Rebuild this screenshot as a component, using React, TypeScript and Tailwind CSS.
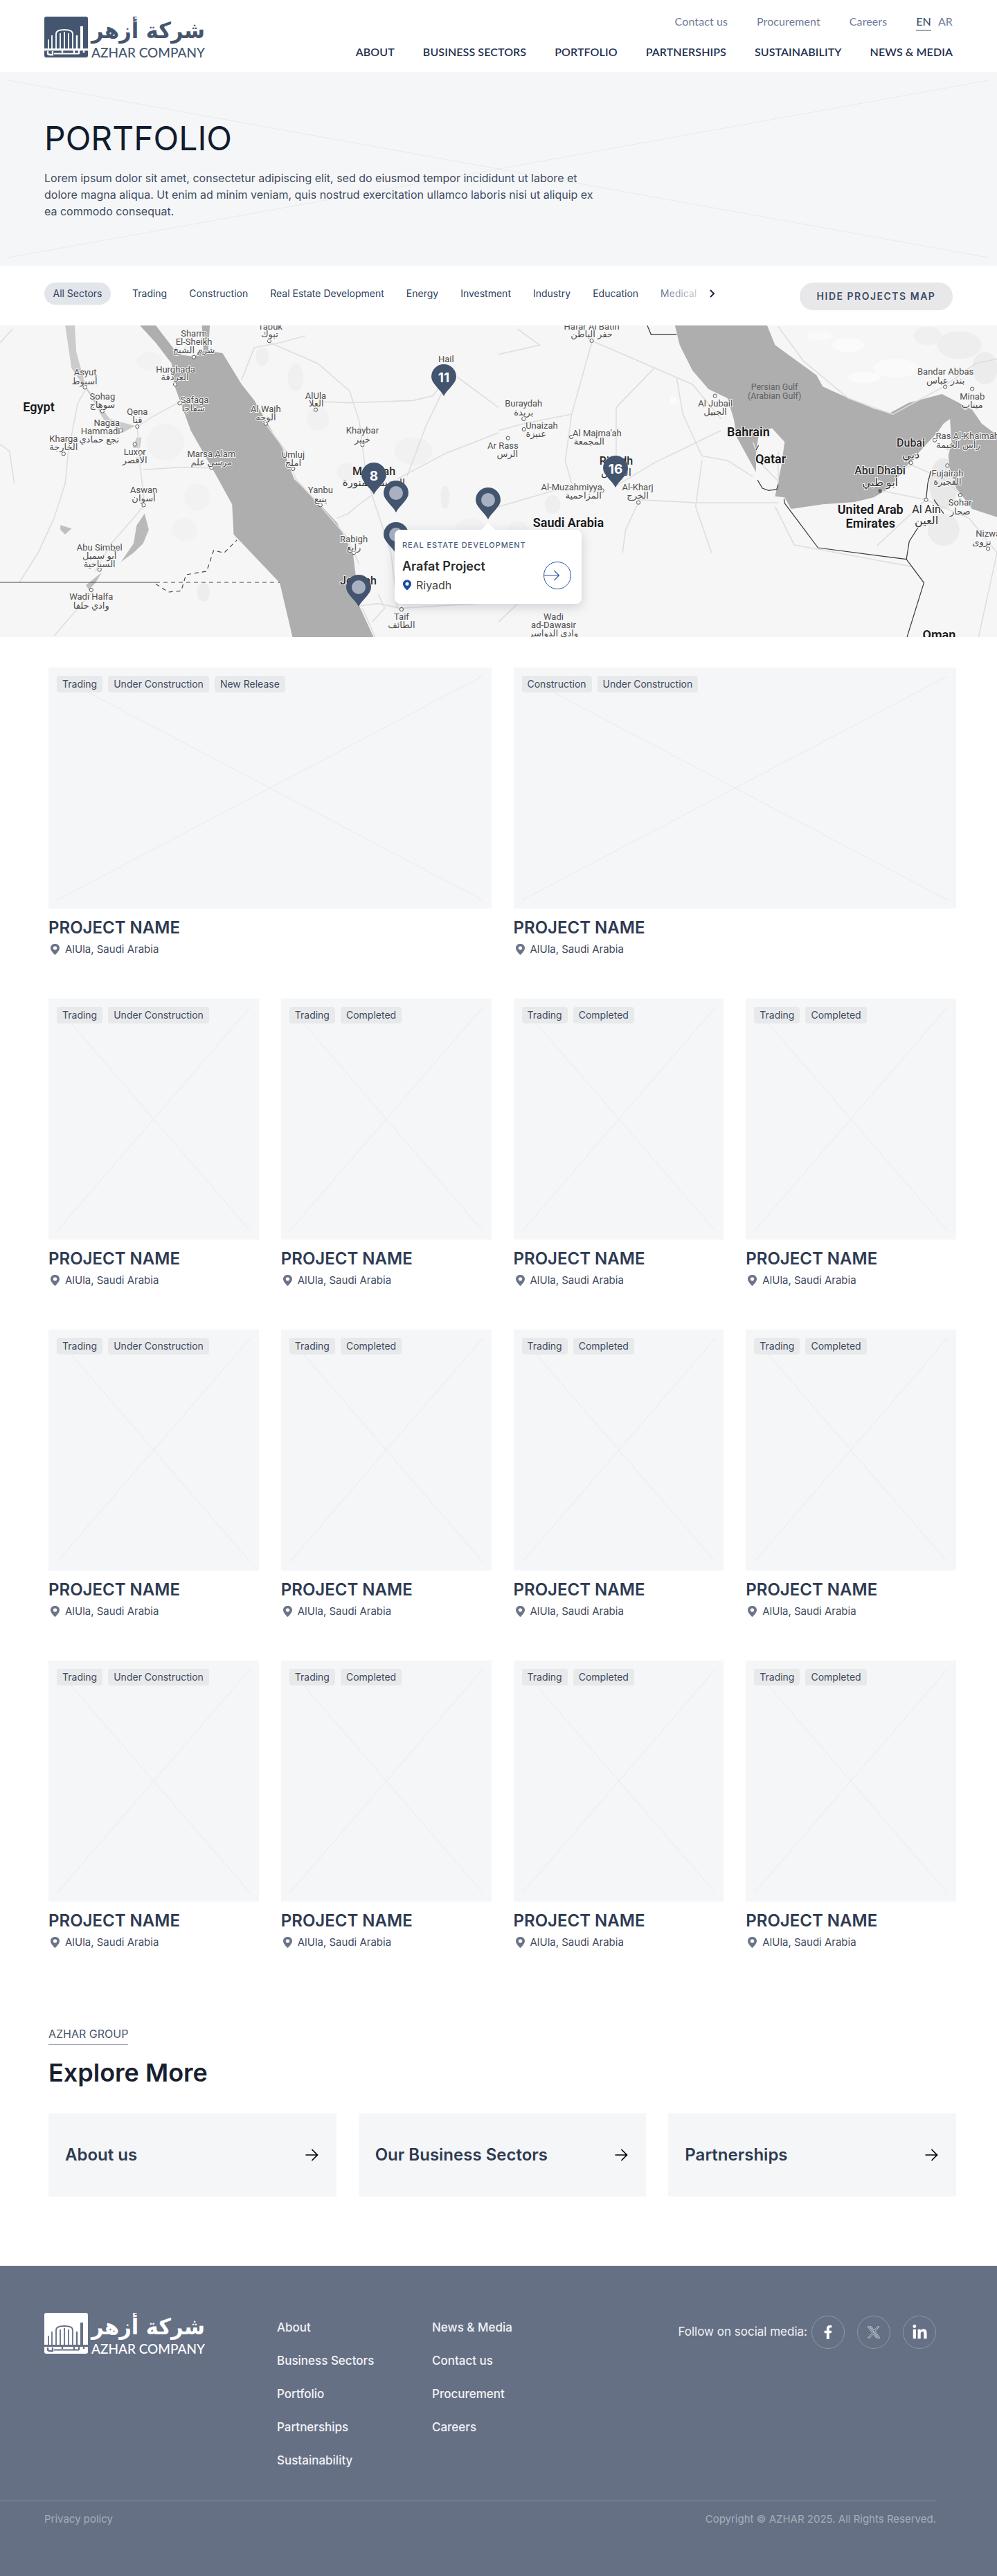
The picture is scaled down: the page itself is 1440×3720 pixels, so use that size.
import React from "react";
import { FaFacebookF, FaLinkedinIn } from "react-icons/fa";

const fx = (p: number, x: number) => p * 720 + (x * 720) / 1568;
const fy = (y: number) => y / 3 - 5;

const Cross = ({ color = "#e9eaed" }: { color?: string }) => (
  <svg className="absolute inset-3 w-[calc(100%-24px)] h-[calc(100%-24px)]" viewBox="0 0 100 100" preserveAspectRatio="none">
    <line x1="0" y1="0" x2="100" y2="100" stroke={color} strokeWidth="1" vectorEffect="non-scaling-stroke" />
    <line x1="100" y1="0" x2="0" y2="100" stroke={color} strokeWidth="1" vectorEffect="non-scaling-stroke" />
  </svg>
);

const Logo = ({ box, cut, text }: { box: string; cut: string; text: string }) => (
  <svg width="232" height="59" viewBox="0 0 232 59" className="block shrink-0">
    <rect x="0" y="0" width="63" height="59" rx="3" fill={box} />
    <g stroke={cut} fill="none" strokeWidth="1.8">
      <path d="M11 46V27" />
      <path d="M6 46V33" />
      <path d="M17 46V25Q17 19 29 19Q41 19 41 25V46" />
      <path d="M23 46V24M29 46V22M35 46V24" />
      <path d="M47 46V27" strokeWidth="2.4" />
      <path d="M54 46V14" strokeWidth="4" />
      <path d="M0 47.5H63" strokeWidth="3" />
      <path d="M5 50V53Q5 55 9 55H12V50" strokeWidth="2.4" />
      <path d="M14 53.5H50" strokeWidth="2" />
      <path d="M26 49V52M43 49V53M50 49V54M57 49V52" strokeWidth="2.4" />
    </g>
    <text x="68" y="31" textLength="164" lengthAdjust="spacingAndGlyphs" fontFamily="'DejaVu Sans',sans-serif" fontWeight="700" fontSize="32" fill={text}>شركة أزهر</text>
    <text x="68" y="58.5" textLength="164" lengthAdjust="spacingAndGlyphs" fontFamily="Lato,sans-serif" fontWeight="500" fontSize="19.5" fill={text}>AZHAR COMPANY</text>
  </svg>
);

const PinIcon = ({ color, w = 15, h = 16 }: { color: string; w?: number; h?: number }) => (
  <svg width={w} height={h} viewBox="0 0 15 16" className="shrink-0">
    <path fillRule="evenodd" fill={color} d="M7.5 0C3.6 0 1 2.7 1 6c0 3.600 4.200 8 6.500 10C9.800 14 14 9.600 14 6c0-3.300-2.600-6-6.500-6zm0 3.400A2.700 2.700 0 1 1 7.500 8.800 2.700 2.700 0 0 1 7.500 3.400z" />
  </svg>
);

type Lab = [number, number, number, string, number?, number?, string?];
const labels: Lab[] = [
  [0, 850, 18, "Tabuk"], [0, 848, 52, "تبوك"],
  [0, 610, 48, "Sharm"], [0, 610, 85, "El-Sheikh"], [0, 610, 122, "شرم الشيخ"],
  [0, 552, 204, "Hurghada"], [0, 550, 238, "الغردقة"],
  [0, 268, 217, "Asyut"], [0, 266, 255, "أسيوط"],
  [0, 322, 321, "Sohag"], [0, 322, 358, "سوهاج"],
  [0, 122, 367, "Egypt", 18, 600, "#1a1a1a"],
  [0, 612, 337, "Safaga"], [0, 608, 373, "سفاجا"],
  [0, 432, 388, "Qena"], [0, 432, 424, "قنا"],
  [0, 336, 437, "Nagaa"], [0, 316, 472, "Hammadi"], [0, 312, 508, "نجع حمادي"],
  [0, 200, 505, "Kharga"], [0, 200, 541, "الخارجة"],
  [0, 424, 562, "Luxor"], [0, 424, 598, "الأقصر"],
  [0, 665, 570, "Marsa Alam"], [0, 665, 608, "مرسى علم"],
  [0, 836, 377, "Al Wajh"], [0, 836, 413, "الوجه"],
  [0, 993, 318, "AlUla"], [0, 995, 352, "العلا"],
  [0, 1403, 161, "Hail"],
  [0, 1140, 468, "Khaybar"], [0, 1140, 508, "خيبر"],
  [0, 922, 573, "Umluj"], [0, 922, 611, "املج"],
  [0, 1176, 645, "Madinah", 16, 500, "#2a2a2a"], [0, 1176, 695, "المدينة المنورة", 15, 400, "#333"],
  [0, 1008, 727, "Yanbu"], [0, 1008, 765, "ينبع"],
  [0, 452, 727, "Aswan"], [0, 452, 763, "أسوان"],
  [0, 1113, 940, "Rabigh"], [0, 1113, 977, "رابغ"],
  [0, 313, 975, "Abu Simbel"], [0, 313, 1013, "أبو سمبل"], [0, 313, 1047, "السياحية"],
  [0, 1127, 1120, "Jeddah", 16, 500, "#2a2a2a"],
  [0, 287, 1190, "Wadi Halfa"], [0, 287, 1227, "وادي حلفا"],
  [0, 1263, 1276, "Taif"], [0, 1263, 1312, "الطائف"],
  [1, 293, 18, "Hafar Al Batin"], [1, 293, 52, "حفر الباطن"],
  [1, 79, 353, "Buraydah"], [1, 79, 390, "بريدة"],
  [1, 136, 447, "Unaizah"], [1, 118, 485, "عنيزة"],
  [1, 14, 535, "Ar Rass"], [1, 28, 572, "الرس"],
  [1, 310, 482, "Al Majma'ah"], [1, 285, 517, "المجمعة"],
  [1, 370, 600, "Riyadh", 16, 500, "#2a2a2a"], [1, 370, 650, "الرياض", 15, 400, "#333"],
  [1, 230, 714, "Al-Muzahmiyya"], [1, 267, 750, "المزاحمية"],
  [1, 438, 716, "Al-Kharj"], [1, 438, 752, "الخرج"],
  [1, 220, 868, "Saudi Arabia", 18, 600, "#1a1a1a"],
  [1, 173, 1275, "Wadi"], [1, 173, 1311, "ad-Dawasir"], [1, 173, 1348, "وادي الدواسر"],
  [1, 682, 351, "Al Jubail"], [1, 682, 388, "الجبيل"],
  [1, 868, 279, "Persian Gulf", 12.5, 400, "#626262"], [1, 868, 318, "(Arabian Gulf)", 12.5, 400, "#626262"],
  [1, 786, 474, "Bahrain", 18, 600, "#1a1a1a"],
  [1, 856, 593, "Qatar", 18, 600, "#1a1a1a"],
  [1, 1406, 214, "Bandar Abbas"], [1, 1406, 253, "بندر عباس"],
  [1, 1490, 322, "Minab"], [1, 1490, 358, "ميناب"],
  [1, 1297, 522, "Dubai", 16, 500, "#2a2a2a"], [1, 1297, 575, "دبي", 16, 400, "#333"],
  [1, 1475, 494, "Ras Al-Khaimah"], [1, 1446, 533, "رأس الخيمة"],
  [1, 1412, 655, "Fujairah"], [1, 1412, 691, "الفجيرة"],
  [1, 1200, 642, "Abu Dhabi", 16, 500, "#2a2a2a"], [1, 1200, 695, "أبو ظبي", 16, 400, "#333"],
  [1, 1452, 782, "Sohar"], [1, 1452, 820, "صحار"],
  [1, 1346, 810, "Al Ain", 16, 400, "#2a2a2a"], [1, 1346, 860, "العين", 16, 400, "#333"],
  [1, 1170, 811, "United Arab", 18, 600, "#1a1a1a"], [1, 1170, 871, "Emirates", 18, 600, "#1a1a1a"],
  [1, 1386, 1355, "Oman", 18, 600, "#1a1a1a"],
  [1, 1540, 915, "Nizwa"], [1, 1520, 953, "نزوى"],
];

const dots: [number, number, number][] = [
  [0, 847, 82], [0, 610, 152], [0, 551, 270], [0, 267, 283], [0, 322, 386], [0, 565, 352], [0, 432, 453], [0, 380, 470],
  [0, 200, 571], [0, 424, 530], [0, 665, 632], [0, 836, 440], [0, 993, 380], [0, 1140, 532], [0, 922, 636], [0, 1008, 793],
  [0, 452, 793], [0, 1113, 1000], [0, 313, 1073], [0, 287, 1161], [0, 1263, 1245],
  [1, 293, 81], [1, 79, 420], [1, 80, 465], [1, 30, 503], [1, 229, 498], [1, 326, 730], [1, 440, 782], [1, 681, 320],
  [1, 1405, 281], [1, 1490, 290], [1, 1297, 610], [1, 1372, 512], [1, 1412, 622], [1, 1452, 750], [1, 1345, 770], [1, 1540, 982], [1, 1200, 732],
];

const roads0 = [
  "270,290 245,350 215,560 205,700 170,850 120,1000 60,1130",
  "432,460 440,620 455,790 420,850 350,960 300,1080",
  "450,640 560,630 670,632",
  "430,455 480,410 560,350",
  "290,1170 220,1280 170,1360",
  "0,530 30,560 45,700",
  "0,90 40,30",
  "1140,540 1150,640 1170,750 1230,1000 1250,1240",
  "1280,670 1340,450 1396,290",
  "1396,260 1360,320 1300,340 1100,350 1000,345",
  "1250,680 1400,570 1568,480",
  "1170,750 1130,790 1095,830 1060,850",
  "760,250 800,110 880,90 960,60",
  "850,90 1000,180 1100,300 1130,430 1140,530",
  "1440,240 1568,370",
  "840,450 900,560 930,680 1010,800 1090,930 1130,1050",
  "1130,1230 1190,1220 1260,1240 1500,1220",
  "1140,1240 1180,1365",
  "1190,1180 1210,1240 1170,1300",
];
const roads1 = [
  "0,140 130,100 60,30",
  "293,81 610,270 700,420",
  "293,90 230,400 210,600 230,700",
  "490,200 370,370 370,640",
  "0,470 80,440 230,400",
  "370,710 490,610 700,470",
  "0,800 200,720 330,730",
  "440,780 400,900 390,1000",
  "440,770 620,783 880,783",
  "560,240 580,400 640,580 720,600 800,670",
  "640,600 620,800 670,1000",
  "870,800 930,965 1300,1060 1340,1130",
  "1200,730 1345,770 1480,850",
  "1345,770 1190,970",
  "1480,850 1568,1000 1510,1365",
  "1240,660 1300,620 1400,680 1450,740",
  "880,20 960,170 1100,330 1240,400",
  "1240,400 1400,280 1500,180 1568,160",
  "800,520 830,620 880,690 880,560",
  "0,1300 60,1220",
];
const borders1 = [
  "468,15 480,55 560,55",
  "898,765 900,785 1005,978 1283,1028 1338,1130 1285,1365",
  "1283,1028 1292,950 1320,890",
  "1345,770 1350,700 1360,645",
  "1370,770 1400,830",
  "815,685 830,720 850,730 875,725 880,705",
  "810,555 818,535",
];

const blobs: [number, number, number, number, number, string][] = [
  [0, 825, 150, 20, 40, "#efefef"], [0, 930, 240, 25, 60, "#f0f0f0"], [0, 1000, 420, 35, 50, "#f1f1f1"],
  [0, 470, 170, 40, 40, "#f2f2f2"], [0, 520, 520, 60, 80, "#f2f2f2"], [0, 620, 760, 40, 60, "#f2f2f2"], [0, 580, 900, 40, 50, "#f2f2f2"],
  [0, 640, 1170, 20, 40, "#ededed"], [0, 1300, 560, 60, 60, "#f1f1f1"], [0, 1400, 760, 14, 50, "#eeeeee"], [0, 1090, 650, 30, 40, "#f0f0f0"],
  [0, 1480, 900, 50, 50, "#f2f2f2"], [0, 1300, 1050, 40, 50, "#f2f2f2"],
  [1, 170, 790, 25, 40, "#eeeeee"], [1, 60, 900, 30, 40, "#f2f2f2"], [1, 1400, 900, 50, 70, "#ececec"], [1, 1400, 700, 45, 110, "#e8e8e8"],
  [1, 1100, 100, 50, 30, "#fbfbfb"], [1, 1250, 200, 70, 40, "#fafafa"], [1, 1450, 100, 70, 60, "#eeeeee"], [1, 1350, 60, 45, 40, "#f0f0f0"],
  [1, 1530, 200, 40, 70, "#ececec"], [1, 550, 340, 12, 18, "#fbfbfb"], [1, 1010, 60, 40, 20, "#fafafa"], [1, 1150, 240, 50, 25, "#fbfbfb"],
];

const Pin = ({ x, top, n }: { x: number; top: number; n?: string }) => (
  <g transform={`translate(${x},${top - 470})`}>
    <path fill="#43546f" d="M0 46C-5 36 -18 28 -18 18A18 18 0 0 1 18 18C18 28 5 36 0 46Z" />
    {n ? (
      <text x="0" y="19" textAnchor="middle" dominantBaseline="central" fill="#fff" fontFamily="Inter,sans-serif" fontWeight="700" fontSize="19">{n}</text>
    ) : (
      <circle cx="0" cy="18" r="10" fill="#a9b0c2" />
    )}
  </g>
);

const MapArt = () => (
  <svg width="1440" height="450" viewBox="0 0 1440 450" className="block" fontFamily="Roboto,'DejaVu Sans',sans-serif">
    <rect width="1440" height="450" fill="#f6f6f6" />
    {blobs.map(([p, x, y, rx, ry, c], i) => (
      <ellipse key={i} cx={fx(p, x)} cy={fy(y)} rx={(rx * 720) / 1568} ry={ry / 3} fill={c} />
    ))}
    <g transform="translate(0,-5) scale(0.45918 0.33333)">
      <polygon fill="#cbcbcb" points="205,15 235,15 240,130 270,280 345,420 425,450 385,480 325,420 285,320 225,200" />
      <polygon fill="#cbcbcb" points="430,500 445,500 440,545 418,545" />
      <polygon fill="#b9b9b9" points="455,830 468,900 450,960 420,1000 380,1040 395,1010 420,960 430,880" />
      <polygon fill="#bfbfbf" points="190,880 225,895 205,920 190,900" />
      <polygon fill="#bdbdbd" points="270,1140 320,1085 300,1130 280,1160" />
      <polygon fill="#aeaeae" points="440,15 490,15 560,140 610,150 640,125 635,15 660,15 655,125 700,135 760,270 800,340 850,460 890,550 925,680 1000,780 1060,870 1110,1000 1120,1110 1130,1230 1175,1365 920,1365 880,1130 735,920 730,790 670,640 600,470 550,280 540,180 490,90" />
      {roads0.map((r, i) => (
        <polyline key={i} points={r} fill="none" stroke="#dedede" strokeWidth="1.6" vectorEffect="non-scaling-stroke" />
      ))}
      <polyline points="0,1128 490,1128" fill="none" stroke="#444" strokeWidth="1.2" vectorEffect="non-scaling-stroke" />
      <polyline points="490,1128 880,1128" fill="none" stroke="#444" strokeWidth="1.2" strokeDasharray="6 5" vectorEffect="non-scaling-stroke" />
      <polyline points="490,1135 530,1170 570,1165 585,1095 650,1080 672,990 705,1000 745,945" fill="none" stroke="#444" strokeWidth="1.2" strokeDasharray="6 5" vectorEffect="non-scaling-stroke" />
    </g>
    <g transform="translate(720,-5) scale(0.45918 0.33333)">
      <polygon fill="#aeaeae" points="555,15 845,15 870,100 960,190 1000,230 1020,280 1100,330 1180,375 1230,395 1290,350 1395,312 1490,380 1520,440 1568,490 1568,845 1490,810 1440,720 1420,640 1415,580 1425,520 1420,420 1400,440 1380,480 1345,530 1280,630 1230,720 1180,760 1120,780 1020,790 920,810 900,760 870,755 890,620 900,520 860,460 820,480 810,560 810,650 750,500 740,420 720,330 660,290 610,210 570,100" />
      {roads1.map((r, i) => (
        <polyline key={i} points={r} fill="none" stroke="#dedede" strokeWidth="1.6" vectorEffect="non-scaling-stroke" />
      ))}
      {borders1.map((r, i) => (
        <polyline key={i} points={r} fill="none" stroke="#3a3a3a" strokeWidth="1.2" vectorEffect="non-scaling-stroke" />
      ))}
    </g>
    {dots.map(([p, x, y], i) => (
      <circle key={i} cx={fx(p, x)} cy={fy(y)} r="2.6" fill="#fafafa" stroke="#555" strokeWidth="1" />
    ))}
    <circle cx={fx(1, 1200)} cy={fy(732)} r="1.400" fill="#333" />
    {labels.map(([p, x, y, t, s, w, c], i) => (
      <text key={i} x={fx(p, x)} y={fy(y)} textAnchor="middle" dominantBaseline="central" fontSize={s ?? 13} fontWeight={w ?? 400} fill={c ?? "#505050"} stroke="#f6f6f6" strokeWidth={c === "#626262" ? 0 : 2} style={{ paintOrder: "stroke" }}>{t}</text>
    ))}
    <Pin x={641} top={526} n="11" />
    <Pin x={540} top={668} n="8" />
    <Pin x={889} top={658} n="16" />
    <Pin x={572} top={694} />
    <Pin x={705} top={704} />
    <Pin x={572} top={754} />
    <Pin x={518} top={830} />
  </svg>
);

const Tag = ({ t }: { t: string }) => (
  <span className="h-6 px-2 flex items-center rounded bg-[#e8e9eb] text-sm leading-6 text-[#3f4b60]">{t}</span>
);

const Card = ({ tags }: { tags: string[] }) => (
  <div className="flex flex-col">
    <div className="relative h-[348px] bg-[#f5f6f8]">
      <Cross />
      <div className="absolute left-3 top-3 flex gap-2">
        {tags.map((t) => (
          <Tag key={t} t={t} />
        ))}
      </div>
    </div>
    <h3 className="mt-3 text-2xl leading-8 font-semibold text-[#2e3b52]">PROJECT NAME</h3>
    <div className="mt-[3px] h-6 flex items-center gap-[7px] pl-[2px] text-[15px] text-[#3f4b60]">
      <PinIcon color="#6b7488" />
      <span>AlUla, Saudi Arabia</span>
    </div>
  </div>
);

const Arrow = () => (
  <svg width="24" height="24" viewBox="0 0 24 24" fill="none" stroke="#000" strokeWidth="1.7" className="shrink-0">
    <path d="M3.500 12H20.500M12.500 4l8 8-8 8" />
  </svg>
);

const sectors = ["Trading", "Construction", "Real Estate Development", "Energy", "Investment", "Industry", "Education"];
const flinks1 = ["About", "Business Sectors", "Portfolio", "Partnerships", "Sustainability"];
const flinks2 = ["News & Media", "Contact us", "Procurement", "Careers"];
const mainNav = ["ABOUT", "BUSINESS SECTORS", "PORTFOLIO", "PARTNERSHIPS", "SUSTAINABILITY", "NEWS & MEDIA"];
const restTags = [
  ["Trading", "Under Construction"],
  ["Trading", "Completed"],
  ["Trading", "Completed"],
  ["Trading", "Completed"],
];

const Circle = ({ children }: { children: React.ReactNode }) => (
  <span className="w-12 h-12 rounded-full border border-[#8d95a6] flex items-center justify-center text-white">{children}</span>
);

export default function App() {
  return (
    <div className="w-[1440px] bg-white font-['Inter',sans-serif]">
      <header className="h-[104px] px-16 flex justify-between font-['Lato',sans-serif]">
        <div className="pt-6">
          <Logo box="#44566f" cut="#ffffff" text="#44566f" />
        </div>
        <div className="flex flex-col items-end pt-[21px]">
          <div className="flex items-start gap-[42px] h-[23px] text-base tracking-[0.1px] leading-5 text-[#6f7c97]">
            <span>Contact us</span>
            <span>Procurement</span>
            <span>Careers</span>
            <div className="flex gap-[10px]">
              <span className="h-[23px] border-b border-[#2f3e58] font-medium text-[#3c4c68]">EN</span>
              <span>AR</span>
            </div>
          </div>
          <nav className="mt-[19px] flex gap-[41px] text-base leading-6 font-semibold tracking-[0.1px] text-[#1e3050]">
            {mainNav.map((n) => (
              <span key={n}>{n}</span>
            ))}
          </nav>
        </div>
      </header>

      <section className="relative h-[280px] bg-[#f5f6f8] px-16 pt-[68px]">
        <Cross />
        <div className="relative">
          <h1 className="text-5xl leading-[56px] font-normal text-[#111c2e]">PORTFOLIO</h1>
          <p className="mt-[17px] w-[810px] text-base leading-6 text-[#3f4b60]">
            Lorem ipsum dolor sit amet, consectetur adipiscing elit, sed do eiusmod tempor incididunt ut labore et dolore magna aliqua. Ut enim ad minim veniam, quis nostrud exercitation ullamco laboris nisi ut aliquip ex ea commodo consequat.
          </p>
        </div>
      </section>

      <section className="h-[86px] px-16 pt-6 flex justify-between items-start">
        <div className="flex items-center gap-[32px] h-8 text-sm leading-5 text-[#2d3f5e]">
          <span className="h-8 w-24 -mr-px rounded-2xl bg-[#e2e5ea] flex items-center justify-center">All Sectors</span>
          {sectors.map((s) => (
            <span key={s}>{s}</span>
          ))}
          <div className="flex items-center gap-[18px]">
            <span className="bg-gradient-to-r from-[#5f6e88] to-[#c3c8d2] bg-clip-text text-transparent">Medical</span>
            <svg width="10" height="14" viewBox="0 0 10 14" fill="none" stroke="#1b2a44" strokeWidth="2">
              <path d="M2 2l5 5-5 5" />
            </svg>
          </div>
        </div>
        <button className="h-10 w-[221px] rounded-[20px] bg-[#e8e8ea] text-sm font-semibold tracking-[1.5px] text-[#3e4c66]">HIDE PROJECTS MAP</button>
      </section>

      <section className="relative h-[450px] overflow-hidden">
        <MapArt />
        <div className="absolute left-[570px] top-[295px] w-[270px] h-[107px] rounded-lg bg-white shadow-[0_4px_16px_rgba(60,70,100,0.22)] pl-[11px] pt-[14px]">
          <div className="absolute left-[125px] -top-[10px] w-0 h-0 border-x-[10px] border-x-transparent border-b-[10px] border-b-white" />
          <div className="text-[11px] leading-4 font-medium tracking-[0.95px] text-[#4a5c7c]">REAL ESTATE DEVELOPMENT</div>
          <div className="mt-[11px] text-lg leading-6 font-semibold text-[#2d2d2d]">Arafat Project</div>
          <div className="mt-[3px] flex items-center gap-[6px] text-base leading-6 text-[#444]">
            <PinIcon color="#1d4b9e" w={14} h={16} />
            <span>Riyadh</span>
          </div>
          <span className="absolute left-[215px] top-[46px] w-10 h-10 rounded-full border border-[#2a52b0] flex items-center justify-center">
            <svg width="40" height="40" viewBox="0 0 40 40" fill="none" stroke="#2a52b0" strokeWidth="1.3">
              <path d="M0 20H22M15 12.500l7.500 7.500-7.500 7.500" />
            </svg>
          </span>
        </div>
      </section>

      <main className="ml-[70px] w-[1311px] pt-11">
        <div className="grid grid-cols-2 gap-x-8">
          <Card tags={["Trading", "Under Construction", "New Release"]} />
          <Card tags={["Construction", "Under Construction"]} />
        </div>
        {[0, 1, 2].map((r) => (
          <div key={r} className="mt-[59px] grid grid-cols-4 gap-x-8">
            {restTags.map((t, i) => (
              <Card key={i} tags={t} />
            ))}
          </div>
        ))}

        <div className="mt-[108px]">
          <span className="inline-block h-[28px] border-b border-[#a0a6b5] text-base leading-6 text-[#4a566c]">AZHAR GROUP</span>
        </div>
        <h2 className="mt-[20px] text-4xl leading-10 font-semibold text-[#17202f]">Explore More</h2>
        <div className="mt-[39px] grid grid-cols-3 gap-x-8">
          {["About us", "Our Business Sectors", "Partnerships"].map((t) => (
            <div key={t} className="h-[120px] bg-[#f5f6f8] px-6 flex items-center justify-between">
              <span className="text-2xl font-semibold text-[#2e3b52]">{t}</span>
              <Arrow />
            </div>
          ))}
        </div>
      </main>

      <footer className="mt-[100px] h-[448px] bg-[#667085]">
        <div className="pl-16 pr-[88px] pt-[68px] h-[339px] flex items-start">
          <Logo box="#ffffff" cut="#667085" text="#ffffff" />
          <div className="ml-[104px] w-[224px] pt-[9px] flex flex-col gap-6 text-[17px] leading-6 font-medium text-[#f2f3f5]">
            {flinks1.map((l) => (
              <span key={l}>{l}</span>
            ))}
          </div>
          <div className="pt-[9px] flex flex-col gap-6 text-[17px] leading-6 font-medium text-[#f2f3f5]">
            {flinks2.map((l) => (
              <span key={l}>{l}</span>
            ))}
          </div>
          <div className="ml-auto pt-1 flex items-center gap-[18px]">
            <span className="-mr-3 text-[17px] text-[#f2f3f5]">Follow on social media:</span>
            <Circle>
              <FaFacebookF size={20} />
            </Circle>
            <Circle>
              <svg width="20" height="20" viewBox="0 0 24 24" fill="none" stroke="#fff" strokeWidth="0.7">
                <path d="M18.244 2.25h3.308l-7.227 8.26 8.502 11.24H16.17l-5.214-6.817L4.99 21.75H1.68l7.73-8.835L1.254 2.25H8.08l4.713 6.231zm-1.161 17.52h1.833L7.084 4.126H5.117z" />
              </svg>
            </Circle>
            <Circle>
              <FaLinkedinIn size={23} />
            </Circle>
          </div>
        </div>
        <div className="mr-[88px] border-t border-[#7e889b] pl-16 pt-4 flex justify-between text-[15px] leading-5 text-[#a6adba]">
          <span>Privacy policy</span>
          <span>Copyright © AZHAR 2025. All Rights Reserved.</span>
        </div>
      </footer>
    </div>
  );
}
